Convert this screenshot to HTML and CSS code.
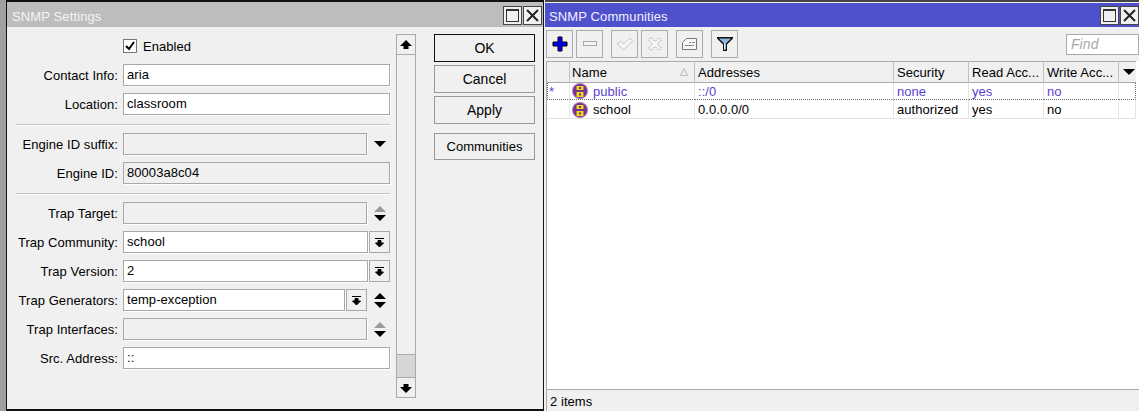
FILE: index.html
```html
<!DOCTYPE html>
<html lang="en">
<head>
  <meta charset="UTF-8" />
  <title>SNMP Settings</title>
  <link rel="stylesheet" href="styles.css">
</head>
<body>
  <div class="desktop">
    <section class="window settings">
      <header class="titlebar">
        <span class="title">SNMP Settings</span>
        <div class="winbtns">
          <button class="winbtn"><svg width="15" height="15" viewBox="0 0 15 15"><rect x="1.5" y="1.5" width="12" height="12" fill="none" stroke="#333"/><path d="M1 2.500h13" stroke="#333"/></svg></button>
          <button class="winbtn"><svg width="15" height="15" viewBox="0 0 15 15"><path d="M2 2l11 11M13 2L2 13" stroke="#222" stroke-width="2"/></svg></button>
        </div>
      </header>
      <div class="settings-body">
        <form class="form">
          <div class="row">
            <span class="label"></span>
            <span class="checkbox"><svg width="12" height="12" viewBox="0 0 12 12"><path d="M2 6l3 3 5-7" fill="none" stroke="#000" stroke-width="2"/></svg></span>
            <span>Enabled</span>
          </div>
          <div class="row"><span class="label">Contact Info:</span><div class="field">aria</div></div>
          <div class="row"><span class="label">Location:</span><div class="field">classroom</div></div>
          <hr class="sep">
          <div class="row"><span class="label">Engine ID suffix:</span><div class="field off"></div><span class="updown"><i class="down"></i></span></div>
          <div class="row"><span class="label">Engine ID:</span><div class="field off">80003a8c04</div></div>
          <hr class="sep">
          <div class="row"><span class="label">Trap Target:</span><div class="field off"></div><span class="updown"><i class="up grey"></i><i class="down"></i></span></div>
          <div class="row"><span class="label">Trap Community:</span><div class="field">school</div><span class="drop"><svg width="11" height="11" viewBox="0 0 11 11"><path d="M1 1.500h9M5.500 10L1.500 6h2.500V3.500h3V6h2.500z" stroke="#000" fill="#000" stroke-width="1"/></svg></span></div>
          <div class="row"><span class="label">Trap Version:</span><div class="field">2</div><span class="drop"><svg width="11" height="11" viewBox="0 0 11 11"><path d="M1 1.500h9M5.500 10L1.500 6h2.500V3.500h3V6h2.500z" stroke="#000" fill="#000" stroke-width="1"/></svg></span></div>
          <div class="row"><span class="label">Trap Generators:</span><div class="field">temp-exception</div><span class="drop"><svg width="11" height="11" viewBox="0 0 11 11"><path d="M1 1.500h9M5.500 10L1.500 6h2.500V3.500h3V6h2.500z" stroke="#000" fill="#000" stroke-width="1"/></svg></span><span class="updown"><i class="up"></i><i class="down"></i></span></div>
          <div class="row"><span class="label">Trap Interfaces:</span><div class="field off"></div><span class="updown"><i class="up grey"></i><i class="down"></i></span></div>
          <div class="row"><span class="label">Src. Address:</span><div class="field">::</div></div>
        </form>
        <div class="scrollbar">
          <div class="scroll-btn"><svg width="12" height="10" viewBox="0 0 12 10"><path d="M6 0l6 6H8.500v3h-5V6H0z"/></svg></div>
          <div class="scroll-track"></div>
          <div class="scroll-thumb"></div>
          <div class="scroll-btn"><svg width="12" height="10" viewBox="0 0 12 10"><path d="M6 10L0 4h3.500V1h5v3H12z"/></svg></div>
        </div>
        <div class="actions">
          <button class="btn default">OK</button>
          <button class="btn">Cancel</button>
          <button class="btn">Apply</button>
          <button class="btn short">Communities</button>
        </div>
      </div>
    </section>

    <section class="window communities">
      <header class="titlebar blue">
        <span class="title">SNMP Communities</span>
        <div class="winbtns">
          <button class="winbtn"><svg width="15" height="15" viewBox="0 0 15 15"><rect x="1.5" y="1.5" width="12" height="12" fill="none" stroke="#333"/><path d="M1 2.500h13" stroke="#333"/></svg></button>
          <button class="winbtn"><svg width="15" height="15" viewBox="0 0 15 15"><path d="M2 2l11 11M13 2L2 13" stroke="#222" stroke-width="2"/></svg></button>
        </div>
      </header>
      <div class="toolbar">
        <button class="tool"><svg width="18" height="18" viewBox="0 0 18 18"><path d="M7 2h4v5h5v4h-5v5H7v-5H2V7h5z" fill="#0000f0" stroke="#000" stroke-width="1"/></svg></button>
        <button class="tool"><svg width="16" height="8" viewBox="0 0 16 8"><rect x="1.500" y="1.500" width="13" height="4" fill="#f4f4f4" stroke="#a8a8a8"/></svg></button>
        <button class="tool gap"><svg width="18" height="16" viewBox="0 0 18 16"><path d="M1.500 8l3-3 3 3 6-6 3 3-9 9z" fill="#f6f6f6" stroke="#aaa" stroke-dasharray="2 1"/></svg></button>
        <button class="tool"><svg width="16" height="16" viewBox="0 0 16 16"><path d="M4 1.500l4 4 4-4 2.500 2.500-4 4 4 4-2.500 2.500-4-4-4 4L1.500 12l4-4-4-4z" fill="#f6f6f6" stroke="#aaa" stroke-dasharray="2 1"/></svg></button>
        <button class="tool gap"><svg width="18" height="16" viewBox="0 0 18 16"><path d="M5.500 2.500h10v11h-14V6.500z" fill="#f6f6f6" stroke="#777"/><path d="M8 6.500h2M11 6.500h3M4 9.500h9" stroke="#888"/></svg></button>
        <button class="tool gap"><svg width="18" height="18" viewBox="0 0 18 18"><path d="M1 2h16v1.500L11 9.500V16H7V9.500L1 3.500z" fill="#111"/><path d="M3 3.500h12L10 8.500v6H8v-6z" fill="#8fb6dc"/><path d="M8 8.500h1v6H8z" fill="#e4eef6"/></svg></button>
        <div class="find">Find</div>
      </div>
      <div class="table-wrap">
        <table class="grid">
          <colgroup>
            <col class="c-flag"><col class="c-name"><col class="c-addr"><col class="c-sec"><col class="c-read"><col class="c-write"><col class="c-more">
          </colgroup>
          <thead>
            <tr>
              <th></th>
              <th class="name"><div class="name-head">Name<svg width="8" height="8" viewBox="0 0 8 8"><path d="M4 .5L7.500 7.500H.5z" fill="none" stroke="#bbb"/></svg></div></th>
              <th>Addresses</th>
              <th>Security</th>
              <th>Read Acc...</th>
              <th>Write Acc...</th>
              <th class="more"><i class="down"></i></th>
            </tr>
          </thead>
          <tbody>
            <tr class="dynamic">
              <td>*</td>
              <td class="name"><div class="name-cell"><svg width="16" height="16" viewBox="0 0 16 16"><circle cx="8" cy="8" r="8" fill="#a77cbc"/><circle cx="8" cy="8" r="7" fill="#7a2f94"/><path d="M4.500 3h7v4h-7zM4.500 9h7v5h-7z" fill="#e6de14"/><path d="M7 4h2v2H7zM7 10.500h2v2H7z" fill="#7a2f94"/></svg>public</div></td>
              <td>::/0</td>
              <td>none</td>
              <td>yes</td>
              <td>no</td>
              <td></td>
            </tr>
            <tr class="plain">
              <td></td>
              <td class="name"><div class="name-cell"><svg width="16" height="16" viewBox="0 0 16 16"><circle cx="8" cy="8" r="8" fill="#a77cbc"/><circle cx="8" cy="8" r="7" fill="#7a2f94"/><path d="M4.500 3h7v4h-7zM4.500 9h7v5h-7z" fill="#e6de14"/><path d="M7 4h2v2H7zM7 10.500h2v2H7z" fill="#7a2f94"/></svg>school</div></td>
              <td>0.0.0.0/0</td>
              <td>authorized</td>
              <td>yes</td>
              <td>no</td>
              <td></td>
            </tr>
          </tbody>
        </table>
      </div>
      <footer class="status">2 items</footer>
    </section>
  </div>
</body>
</html>
```

FILE: styles.css
```css
* {
  box-sizing: border-box;
}
html, body {
  height: 100%;
}
body {
  margin: 0;
  overflow: hidden;
  background: #a0a0a0;
  font-family: "Liberation Sans", Arial, sans-serif;
  font-size: 13px;
  letter-spacing: 0.06px;
  color: #000;
}
.desktop {
  display: flex;
  height: 411px;
  padding-left: 6px;
}
.window {
  display: flex;
  flex-direction: column;
  background: #f0f0f0;
}
.settings {
  width: 538px;
  height: 411px;
  border: 2px solid #111;
  border-left-width: 1px;
  border-right-width: 1px;
}
.communities {
  flex: 1;
  padding-top: 3px;
  border-left: 1px solid #f0f0f0;
  box-shadow: inset 0 2px 0 #444;
}
.titlebar {
  display: flex;
  align-items: center;
  justify-content: space-between;
  height: 25px;
  flex: none;
  padding: 2px 1px 0 5px;
  background: #bdbdbd;
  color: #f4f4f4;
}
.titlebar.blue {
  height: 24px;
  padding: 1px 0 0 4px;
  background: #4f50cc;
  color: #f2f2ff;
}
.title {
  margin-top: 1px;
  letter-spacing: 0.12px;
}
.winbtns {
  display: flex;
  gap: 1px;
}
.winbtn {
  display: flex;
  align-items: center;
  justify-content: center;
  width: 19px;
  height: 19px;
  padding: 0;
  background: #f0f0f0;
  border: 1px solid #444;
}
.settings-body {
  display: flex;
  flex: 1;
  padding-top: 7px;
}
.form {
  display: flex;
  flex-direction: column;
  width: 389px;
  height: 100%;
  padding: 1px 6px 0 0;
  gap: 7px;
}
.row {
  display: flex;
  align-items: center;
  height: 22px;
}
.label {
  width: 111px;
  flex: none;
  margin-right: 5px;
  text-align: right;
  white-space: nowrap;
}
.field {
  flex: 1;
  min-width: 0;
  height: 22px;
  padding-left: 3px;
  line-height: 20px;
  background: #fff;
  border: 1px solid #a8a8a8;
  box-shadow: 1px 1px 0 #fff;
}
.field.off {
  background: #f0f0f0;
}
.checkbox {
  display: flex;
  align-items: center;
  justify-content: center;
  width: 14px;
  height: 14px;
  margin-right: 6px;
  background: #fff;
  border: 1px solid #777;
}
.sep {
  width: 374px;
  height: 1px;
  margin: 2px 0 1px 9px;
  border: 0;
  background: #c4c4c4;
  box-shadow: 0 1px 0 #fff;
}
.updown {
  display: flex;
  flex-direction: column;
  align-items: center;
  justify-content: center;
  gap: 3px;
  width: 23px;
  flex: none;
  padding-left: 3px;
}
.drop {
  display: flex;
  align-items: center;
  justify-content: center;
  width: 21px;
  height: 22px;
  flex: none;
  margin-left: 1px;
  background: #f0f0f0;
  border: 1px solid #a8a8a8;
}
.up, .down {
  display: block;
  width: 0;
  height: 0;
  border-left: 6px solid transparent;
  border-right: 6px solid transparent;
}
.up {
  border-bottom: 6px solid #000;
}
.up.grey {
  border-bottom-color: #9a9a96;
}
.down {
  border-top: 6px solid #000;
}
.scrollbar {
  display: flex;
  flex-direction: column;
  width: 20px;
  height: 364px;
  background: #f0f0f0;
  border: 1px solid #aaa;
}
.scroll-btn {
  display: flex;
  align-items: center;
  justify-content: center;
  height: 19px;
  flex: none;
}
.scroll-track {
  flex: 1;
  border-top: 1px solid #aaa;
}
.scroll-thumb {
  height: 24px;
  background: #d6d6d6;
  border-top: 1px solid #aaa;
  border-bottom: 1px solid #aaa;
}
.actions {
  display: flex;
  flex-direction: column;
  gap: 3px;
  width: 101px;
  margin-left: 18px;
}
.btn {
  height: 28px;
  padding: 0;
  font: inherit;
  font-size: 14px;
  color: #000;
  background: #f0f0f0;
  border: 1px solid #999;
}
.btn.default {
  border-color: #111;
}
.btn.short {
  height: 27px;
  margin-top: 6px;
  font-size: 13px;
}
.toolbar {
  display: flex;
  align-items: center;
  gap: 3px;
  height: 34px;
  flex: none;
  padding-left: 1px;
}
.tool {
  display: flex;
  align-items: center;
  justify-content: center;
  width: 27px;
  height: 28px;
  padding: 0;
  background: #f0f0f0;
  border: 1px solid #aaa;
}
.tool.gap {
  margin-left: 5px;
}
.find {
  width: 73px;
  height: 21px;
  margin-left: auto;
  padding-left: 4px;
  line-height: 19px;
  font-style: italic;
  font-size: 14px;
  color: #a8a8a8;
  background: #fff;
  border: 1px solid #aaa;
}
.table-wrap {
  flex: 1;
  margin-left: 1px;
  background: #fff;
  border-left: 1px solid #aaa;
}
.grid {
  width: 589px;
  border-collapse: separate;
  border-spacing: 0;
  table-layout: fixed;
}
.c-flag { width: 23px; }
.c-name { width: 125px; }
.c-addr { width: 199px; }
.c-sec { width: 75px; }
.c-read { width: 75px; }
.c-write { width: 75px; }
.c-more { width: 17px; }
.grid th {
  height: 22px;
  padding: 0 0 0 3px;
  font-weight: normal;
  text-align: left;
  white-space: nowrap;
  overflow: hidden;
  background: #f0f0f0;
  border-right: 1px solid #c0c0c0;
  border-top: 1px solid #aaa;
  border-bottom: 1px solid #aaa;
}
.grid th.more {
  border-right: 0;
  padding-left: 4px;
}
.grid td {
  height: 18px;
  padding: 0 0 0 3px;
  white-space: nowrap;
  overflow: hidden;
  border-right: 1px solid #e4e4e4;
  border-bottom: 1px solid #e4e4e4;
}
.grid .name {
  padding-left: 2px;
}
.name-head {
  display: flex;
  align-items: center;
  justify-content: space-between;
  padding-right: 6px;
}
.name-cell {
  display: flex;
  align-items: center;
  gap: 5px;
}
.dynamic td {
  height: 17px;
  color: #5a3fd0;
  border-bottom: 1px dotted #666;
}
.dynamic td:first-child {
  border-left: 1px dotted #666;
  padding-left: 1px;
}
.dynamic td:last-child {
  border-right: 1px dotted #666;
}
.plain td {
  height: 19px;
  padding-top: 1px;
}
.status {
  height: 22px;
  flex: none;
  margin-left: 1px;
  padding: 4px 0 0 3px;
  background: #f0f0f0;
  border-top: 1px solid #aaa;
  border-left: 1px solid #aaa;
}
```
